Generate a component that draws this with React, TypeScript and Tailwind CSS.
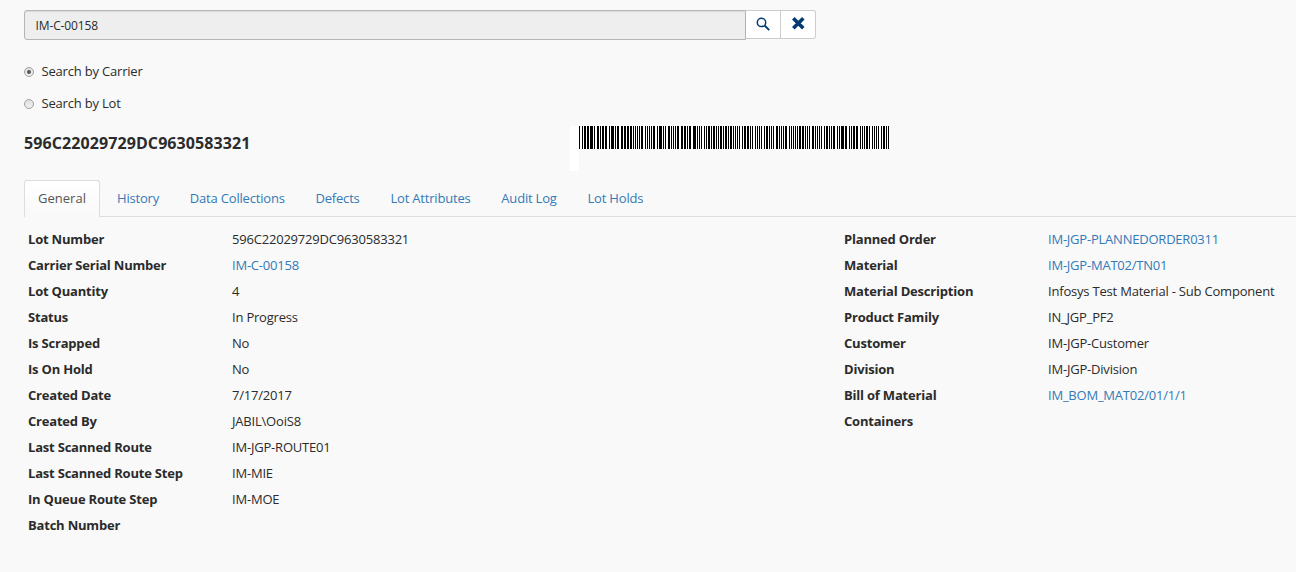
import { ReactNode } from 'react';

const LOT = '596C22029729DC9630583321';

// Bars of the lot barcode as [x, width] in pixels; a bare number is a one-pixel bar.
const BARS: (number | [number, number])[] = [
  0, 3, [5, 2], [8, 2], [11, 3], 15, [18, 2], 21, [23, 2], [26, 2], 30, [32, 3], 36, [38, 2], [42, 2], [45, 2],
  [48, 2], [51, 2], 54, 56, 58, 60, [62, 2], 66, 68, 70, 72, [74, 2], 78, [80, 3], 84, 86, [89, 2], 92, 94, 96,
  [98, 2], [102, 2], [105, 2], 108, [110, 2], [114, 3], 118, 120, 122, 125, 127, [129, 2], 132, [134, 2], 137,
  139, [141, 2], 144, [146, 2], 149, [151, 2], 154, 156, 158, 160, 163, [165, 2], [168, 2], 171, 173, 176, 178,
  180, 182, 185, [187, 2], 190, 192, 194, [197, 2], 200, 202, 204, [206, 2], 210, 212, 214, 216, 218, [220, 2],
  [223, 2], 226, 228, 230, [233, 2], 236, 238, 240, 242, 245, [247, 2], 250, 252, [254, 2], 258, 260, [262, 3],
  [266, 2], 270, 272, [274, 2], [277, 2], 281, 283, 285, [287, 2], 290, 293, 295, 297, 299, 302, [304, 2], 307, 309,
];

function Barcode() {
  return (
    <svg width="310" height="23" viewBox="0 0 310 23" shapeRendering="crispEdges" className="block bg-white">
      {BARS.map((bar) => {
        const [x, w] = typeof bar === 'number' ? [bar, 1] : bar;
        return <rect key={x} x={x} y="0" width={w} height="23" fill="#000" />;
      })}
    </svg>
  );
}

type Field = { label: string; value?: string; link?: boolean };

const left: Field[] = [
  { label: 'Lot Number', value: LOT },
  { label: 'Carrier Serial Number', value: 'IM-C-00158', link: true },
  { label: 'Lot Quantity', value: '4' },
  { label: 'Status', value: 'In Progress' },
  { label: 'Is Scrapped', value: 'No' },
  { label: 'Is On Hold', value: 'No' },
  { label: 'Created Date', value: '7/17/2017' },
  { label: 'Created By', value: 'JABIL\\OoiS8' },
  { label: 'Last Scanned Route', value: 'IM-JGP-ROUTE01' },
  { label: 'Last Scanned Route Step', value: 'IM-MIE' },
  { label: 'In Queue Route Step', value: 'IM-MOE' },
  { label: 'Batch Number' },
];

const right: Field[] = [
  { label: 'Planned Order', value: 'IM-JGP-PLANNEDORDER0311', link: true },
  { label: 'Material', value: 'IM-JGP-MAT02/TN01', link: true },
  { label: 'Material Description', value: 'Infosys Test Material - Sub Component' },
  { label: 'Product Family', value: 'IN_JGP_PF2' },
  { label: 'Customer', value: 'IM-JGP-Customer' },
  { label: 'Division', value: 'IM-JGP-Division' },
  { label: 'Bill of Material', value: 'IM_BOM_MAT02/01/1/1', link: true },
  { label: 'Containers' },
];

const tabs = ['History', 'Data Collections', 'Defects', 'Lot Attributes', 'Audit Log', 'Lot Holds'];

function Fields({ items }: { items: Field[] }) {
  return (
    <dl>
      {items.map((f) => (
        <div key={f.label} className="flex h-[26px] items-center whitespace-nowrap">
          <dt className="w-[204px] shrink-0 font-bold tracking-[-0.2px]">{f.label}</dt>
          <dd className={f.link ? 'tracking-[-0.22px] text-[#337ab7]' : 'tracking-[-0.2px]'}>{f.value}</dd>
        </div>
      ))}
    </dl>
  );
}

function Radio({ checked, children }: { checked?: boolean; children: ReactNode }) {
  return (
    <label className="flex h-8 items-center">
      <span className="mt-px mr-[7.5px] flex size-[10px] items-center justify-center rounded-full border border-[#a0a0a0] bg-linear-to-b from-[#e0e0e0] to-[#f0f0f0]">
        {checked && <span className="size-1 rounded-full bg-[#555]" />}
      </span>
      {children}
    </label>
  );
}

export default function App() {
  return (
    <div className="h-[572px] w-[1296px] overflow-hidden bg-[#f9f9f9] pt-[10px] pl-6 font-['Open_Sans',sans-serif] text-[13px] leading-[20px] tracking-[-0.19px] text-[#2b2b2b]">
      <div className="flex w-[792px] items-start">
        <div className="flex h-[30px] w-[722px] items-center rounded-l-[3px] border border-[#b5b5b5] bg-[#eee] pt-[2px] pl-[10.5px] text-[12px] tracking-[-0.12px] shadow-[inset_0_1px_1px_rgba(0,0,0,0.08)]">
          IM-C-00158
        </div>
        <button className="flex h-[29px] w-[35px] items-center justify-center border-y border-r border-[#ccc] bg-white pb-[2px]">
          <svg width="14" height="14" viewBox="0 0 14 14" fill="none" stroke="#003a70">
            <circle cx="5.5" cy="5.4" r="4.2" strokeWidth="1.5" />
            <path d="M8.5 8.4 L13.2 13.1" strokeWidth="2" />
          </svg>
        </button>
        <button className="flex h-[29px] w-[35px] items-center justify-center rounded-r-[3px] border-y border-r border-[#ccc] bg-white pb-[3px]">
          <svg width="14" height="14" viewBox="0 0 14 14" stroke="#003a70" strokeWidth="3.6">
            <path d="M2.3 2.3 L12.3 12.3 M12.3 2.3 L2.3 12.3" />
          </svg>
        </button>
      </div>

      <div className="mt-[15px]">
        <Radio checked>Search by Carrier</Radio>
        <Radio>Search by Lot</Radio>
      </div>

      <div className="mt-[7px] flex h-[54px] items-start">
        <h1 className="w-[546px] pt-[7px] text-[16px] leading-[20px] font-bold tracking-[0.09px]">{LOT}</h1>
        <div className="h-[45px] w-[9px] bg-white" />
        <Barcode />
      </div>

      <div className="flex h-[37px] items-end border-b border-[#ddd]">
        <div className="-mb-px flex h-[37px] w-[76px] items-center justify-center rounded-t-[3px] border border-b-0 border-[#ddd] bg-linear-to-b from-white to-[#f9f9f9] pb-[2px] tracking-normal text-[#555]">
          General
        </div>
        <div className="flex h-[36px] items-center gap-[30.8px] pl-[17px] text-[#337ab7]">
          {tabs.map((t) => (
            <span key={t}>{t}</span>
          ))}
        </div>
      </div>

      <div className="flex pt-[9px] pl-1">
        <div className="w-[816px] shrink-0">
          <Fields items={left} />
        </div>
        <Fields items={right} />
      </div>
    </div>
  );
}
